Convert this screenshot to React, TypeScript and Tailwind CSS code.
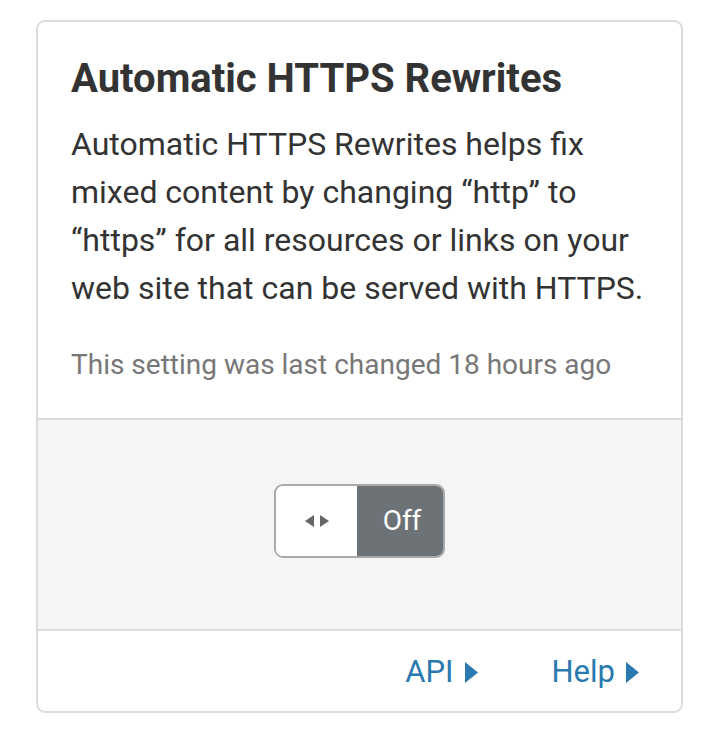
export default function App() {
  return (
    <div className="min-h-screen bg-white pl-[36px] pr-[34px] pt-[20px] font-['Roboto',sans-serif]">
      <div className="overflow-hidden rounded-[9px] border-2 border-[#dcdcdc] bg-white">
        {/* Body */}
        <div className="px-[33px] pt-[33px] pb-[37px]">
          <h3 className="text-[40px] font-bold leading-[48px] text-[#333]">Automatic HTTPS Rewrites</h3>
          <p className="mt-[17px] text-[32px] leading-[48px] text-[#333]">
            Automatic HTTPS Rewrites helps fix mixed content by changing “http” to “https” for all resources or
            links on your web site that can be served with HTTPS.
          </p>
          <p className="mt-[37px] text-[28px] leading-[32px] text-[#777]">This setting was last changed 18 hours ago</p>
        </div>

        {/* Control */}
        <div className="flex justify-center border-y-2 border-[#dcdcdc] bg-[#f5f5f5] pt-[64px] pb-[71px]">
          <div className="flex h-[74px] w-[171px] overflow-hidden rounded-[9px] border-2 border-[#a9a9a9]">
            <div className="flex w-[81px] items-center justify-center gap-[6px] bg-white">
              <svg width="9" height="12" viewBox="0 0 9 12">
                <path d="M9 0 L0 6 L9 12 Z" fill="#666" />
              </svg>
              <svg width="9" height="12" viewBox="0 0 9 12">
                <path d="M0 0 L9 6 L0 12 Z" fill="#666" />
              </svg>
            </div>
            <div className="flex flex-1 items-center justify-center bg-[#6d7277] pl-[4px] text-[28px] text-white">
              Off
            </div>
          </div>
        </div>

        {/* Footer */}
        <div className="flex h-[80px] items-center justify-end gap-[74px] pr-[42px] pt-[2px] text-[31px] text-[#2a7ab0]">
          <a className="flex items-center gap-[11px]">
            API
            <svg width="13" height="21" viewBox="0 0 13 21">
              <path d="M0 0 L13 10.5 L0 21 Z" fill="#2a7ab0" />
            </svg>
          </a>
          <a className="flex items-center gap-[11px]">
            Help
            <svg width="13" height="21" viewBox="0 0 13 21">
              <path d="M0 0 L13 10.5 L0 21 Z" fill="#2a7ab0" />
            </svg>
          </a>
        </div>
      </div>
    </div>
  );
}
